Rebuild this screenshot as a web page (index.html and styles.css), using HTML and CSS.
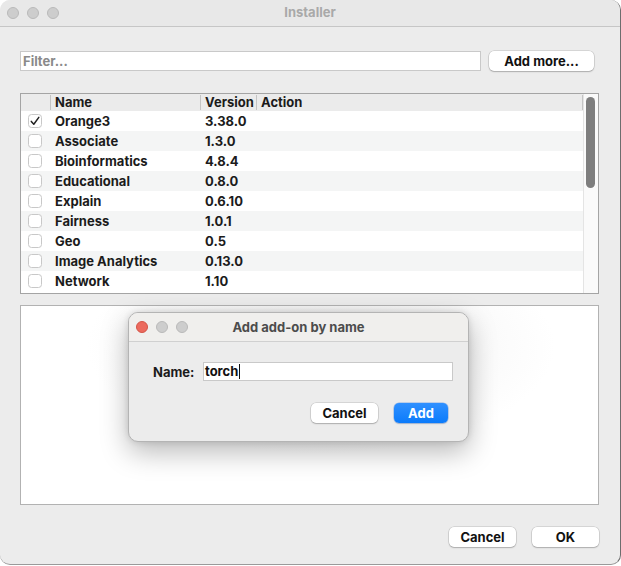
FILE: index.html
```html
<!DOCTYPE html>
<html>
<head>
<meta charset="utf-8">
<link rel="stylesheet" href="styles.css">
</head>
<body>
<div class="window">
  <div class="titlebar">
    <div class="lights">
      <span class="light"></span><span class="light"></span><span class="light"></span>
    </div>
    <div class="title">Installer</div>
  </div>
  <div class="content">
    <div class="filter-row">
      <div class="filter">Filter...</div>
      <div class="btn btn-addmore">Add more...</div>
    </div>
    <div class="table">
      <div class="table-main">
        <div class="thead">
          <div class="c-check"></div>
          <div class="c-name th">Name</div>
          <div class="c-ver th">Version</div>
          <div class="c-act th">Action</div>
        </div>
        <div class="rows">
          <div class="row"><div class="c-check"><span class="cb"><svg width="12" height="12" viewBox="0 0 12 12"><path d="M2.3 6.4 L4.8 9.2 L9.8 2.4" fill="none" stroke="#222" stroke-width="1.5" stroke-linecap="round" stroke-linejoin="round"/></svg></span></div><div class="c-name">Orange3</div><div class="c-ver">3.38.0</div><div class="c-act"></div></div>
          <div class="row"><div class="c-check"><span class="cb"></span></div><div class="c-name">Associate</div><div class="c-ver">1.3.0</div><div class="c-act"></div></div>
          <div class="row"><div class="c-check"><span class="cb"></span></div><div class="c-name">Bioinformatics</div><div class="c-ver">4.8.4</div><div class="c-act"></div></div>
          <div class="row"><div class="c-check"><span class="cb"></span></div><div class="c-name">Educational</div><div class="c-ver">0.8.0</div><div class="c-act"></div></div>
          <div class="row"><div class="c-check"><span class="cb"></span></div><div class="c-name">Explain</div><div class="c-ver">0.6.10</div><div class="c-act"></div></div>
          <div class="row"><div class="c-check"><span class="cb"></span></div><div class="c-name">Fairness</div><div class="c-ver">1.0.1</div><div class="c-act"></div></div>
          <div class="row"><div class="c-check"><span class="cb"></span></div><div class="c-name">Geo</div><div class="c-ver">0.5</div><div class="c-act"></div></div>
          <div class="row"><div class="c-check"><span class="cb"></span></div><div class="c-name">Image Analytics</div><div class="c-ver">0.13.0</div><div class="c-act"></div></div>
          <div class="row"><div class="c-check"><span class="cb"></span></div><div class="c-name">Network</div><div class="c-ver">1.10</div><div class="c-act"></div></div>
        </div>
      </div>
      <div class="scrollbar"><div class="thumb"></div></div>
    </div>
    <div class="details"></div>
    <div class="bottom-row">
      <div class="btn btn-bottom">Cancel</div>
      <div class="btn btn-bottom">OK</div>
    </div>
  </div>

  <div class="dialog">
    <div class="d-titlebar">
      <div class="lights d-lights">
        <span class="light red"></span><span class="light"></span><span class="light"></span>
      </div>
      <div class="d-title">Add add-on by name</div>
    </div>
    <div class="d-body">
      <div class="d-field">
        <span class="d-label">Name:</span>
        <div class="d-input">torch<span class="caret"></span></div>
      </div>
      <div class="d-buttons">
        <div class="btn btn-cancel">Cancel</div>
        <div class="btn btn-add">Add</div>
      </div>
    </div>
  </div>
</div>
</body>
</html>
```

FILE: styles.css
```css
* { box-sizing: border-box; }
html, body {
  margin: 0;
  padding: 0;
  background: #ffffff;
}
body {
  font-family: Inter, "Noto Sans", "Liberation Sans", sans-serif;
  font-size: 13px;
  font-weight: 700;
  color: #1b1b1b;
}
.window {
  position: relative;
  width: 621px;
  height: 565px;
  background: #ececec;
  border-radius: 10px;
  border-right: 1px solid #6d6d6d;
  border-bottom: 1px solid #9a9a9a;
  overflow: hidden;
}
.titlebar {
  position: relative;
  height: 27px;
  background: #e8e8e8;
  border-bottom: 1px solid #c6c6c6;
  display: flex;
  align-items: center;
  padding-left: 7px;
}
.lights {
  display: flex;
  gap: 8px;
}
.light {
  width: 12px;
  height: 12px;
  border-radius: 50%;
  background: #cdcdcd;
  border: 1px solid #b9b9b9;
}
.light.red {
  background: #ec6a5e;
  border-color: #d35447;
}
.title {
  position: absolute;
  left: 0;
  right: 0;
  top: 4px;
  text-align: center;
  color: #a9a9a9;
  font-size: 13px;
}
.content {
  padding: 24px 21px 0 20px;
  display: flex;
  flex-direction: column;
}
.filter-row {
  display: flex;
  gap: 8px;
  height: 20px;
}
.filter {
  width: 461px;
  height: 20px;
  background: #fff;
  border: 1px solid #c9c9c9;
  color: #8a8a8a;
  font-weight: 700;
  padding-left: 2px;
  line-height: 18px;
}
.btn {
  background: #fff;
  border-radius: 5px;
  box-shadow: 0 0 0 0.5px rgba(0,0,0,0.18), 0 1px 1.5px rgba(0,0,0,0.2);
  text-align: center;
  height: 20px;
  line-height: 20px;
  color: #111;
}
.btn-addmore {
  width: 105px;
}
.table {
  margin-top: 22px;
  height: 201px;
  border: 1px solid #a4a4a4;
  background: #fff;
  display: flex;
}
.table-main {
  flex: 1;
  display: flex;
  flex-direction: column;
  overflow: hidden;
}
.thead {
  height: 17px;
  background: #ebebeb;
  display: flex;
  align-items: center;
  flex: none;
}
.th {
  position: relative;
  height: 17px;
  line-height: 17px;
  border-left: 1px solid #c9c9c9;
  border-image: linear-gradient(to bottom, transparent 2px, #c4c4c4 2px, #c4c4c4 15px, transparent 15px) 1;
}
.thead .c-act {
  border-right: 1px solid #c4c4c4;
  border-image: linear-gradient(to bottom, transparent 2px, #c4c4c4 2px, #c4c4c4 15px, transparent 15px) 1;
}
.c-check { width: 29px; flex: none; display: flex; align-items: center; padding-left: 7px; }
.c-name { width: 150px; flex: none; padding-left: 4px; }
.c-ver { width: 56px; flex: none; padding-left: 4px; }
.c-act { flex: 1; padding-left: 4px; }
.rows {
  flex: 1;
  overflow: hidden;
}
.row {
  height: 20px;
  display: flex;
  align-items: center;
  line-height: 21px;
}
.row:nth-child(even) { background: #f4f5f5; }
.row .c-name, .row .c-ver { padding-left: 5px; }
.cb {
  width: 14px;
  height: 14px;
  border-radius: 3.5px;
  border: 1px solid #c8c8c8;
  background: #fff;
  display: flex;
  align-items: center;
  justify-content: center;
}
.scrollbar {
  width: 15px;
  flex: none;
  background: #fafafa;
  border-left: 1px solid #e4e4e4;
  padding: 3px 2px 0 2px;
}
.thumb {
  width: 9px;
  height: 91px;
  border-radius: 5px;
  background: #7e7e7e;
}
.details {
  margin-top: 11px;
  height: 200px;
  border: 1px solid #b2b2b2;
  background: radial-gradient(ellipse 260px 120px at 300px 40px, #efefef, #ffffff 90%);
}
.bottom-row {
  margin-top: 22px;
  display: flex;
  justify-content: flex-end;
  gap: 16px;
}
.btn-bottom {
  width: 67px;
}
.dialog {
  position: absolute;
  left: 128px;
  top: 312px;
  width: 341px;
  height: 130px;
  border-radius: 10px;
  border: 1px solid #b4b4b4;
  background: #ececec;
  box-shadow: 0 10px 28px rgba(0,0,0,0.28), 0 0 6px rgba(0,0,0,0.12);
  overflow: hidden;
}
.d-titlebar {
  position: relative;
  height: 29px;
  background: #f0efed;
  border-bottom: 1px solid #d0d0d0;
  display: flex;
  align-items: center;
  padding-left: 7px;
}
.d-title {
  position: absolute;
  left: 0;
  right: 0;
  top: 6px;
  text-align: center;
  color: #4c4c4c;
}
.d-body {
  padding: 20px 15px 0 24px;
}
.d-field {
  display: flex;
  align-items: center;
  gap: 9px;
}
.d-label {
  width: 41px;
  flex: none;
}
.d-input {
  width: 250px;
  flex: none;
  height: 19px;
  background: #fff;
  border: 1px solid #c9c9c9;
  line-height: 17px;
  padding-left: 1px;
  color: #111;
  display: flex;
  align-items: center;
}
.caret {
  display: inline-block;
  width: 1px;
  height: 15px;
  background: #111;
  margin-left: 1px;
}
.d-buttons {
  margin-top: 22px;
  padding-right: 5px;
  display: flex;
  justify-content: flex-end;
  gap: 16px;
}
.btn-cancel {
  width: 67px;
}
.btn-add {
  width: 54px;
  color: #fff;
  background: linear-gradient(to bottom, #2f90ff, #0b7bfb);
  box-shadow: 0 0 0 0.5px rgba(0,90,220,0.4), 0 1px 1.5px rgba(0,0,0,0.15);
}
```
